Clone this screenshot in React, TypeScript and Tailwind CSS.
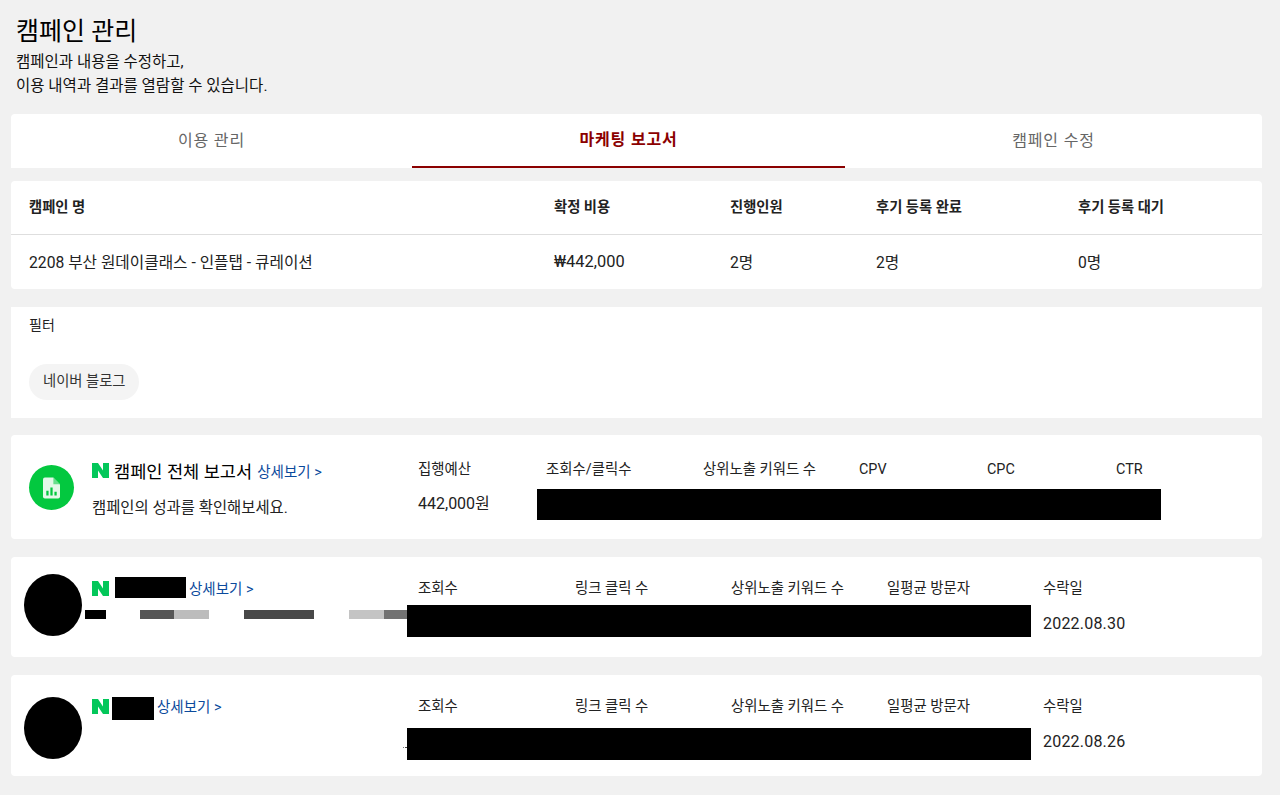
const FONT = 'font-["Roboto","Noto_Sans_CJK_KR",sans-serif]';

function NaverN({ className = '' }: { className?: string }) {
  return (
    <svg viewBox="0 0 17 15" className={`w-[17px] h-[15px] shrink-0 ${className}`}>
      <path d="M0 0h6l5 7.5V0h6v15h-6L6 7.5V15H0z" fill="#03c75a" />
    </svg>
  );
}

function DetailLink({ className = '' }: { className?: string }) {
  return <span className={`text-[14.5px] leading-5 text-[#0b4a9c] whitespace-nowrap ${className}`}>상세보기 &gt;</span>;
}

function ReportIcon() {
  return (
    <div className="w-[45px] h-[45px] rounded-full bg-[#03c83f] flex items-center justify-center shrink-0">
      <svg viewBox="0 0 18 22" className="w-[17px] h-[22px]">
        <path d="M2 0h9l7 7v13a2 2 0 0 1-2 2H2a2 2 0 0 1-2-2V2a2 2 0 0 1 2-2z" fill="#e4f8e9" />
        <path d="M11 0l7 7h-7z" fill="#03c83f" opacity="0.55" />
        <path d="M3.5 14h2.4v5H3.5zM7.8 10.5h2.4V19H7.8zM12.1 15h2.4v4h-2.4z" fill="#03c83f" />
      </svg>
    </div>
  );
}

const INFO_COLS = [
  { head: '캠페인 명', value: '2208 부산 원데이클래스 - 인플탭 - 큐레이션', w: 'w-[525px]', size: 'text-[15.7px]' },
  { head: '확정 비용', value: '₩442,000', w: 'w-[176px]', size: 'text-[16.4px]' },
  { head: '진행인원', value: '2명', w: 'w-[146px]', size: 'text-[15.7px]' },
  { head: '후기 등록 완료', value: '2명', w: 'w-[202px]', size: 'text-[15.7px]' },
  { head: '후기 등록 대기', value: '0명', w: 'w-[150px]', size: 'text-[15.7px]' },
];

const ROW_HEADS = [
  { label: '조회수', w: 'w-[157px]' },
  { label: '링크 클릭 수', w: 'w-[156px]' },
  { label: '상위노출 키워드 수', w: 'w-[156px]' },
  { label: '일평균 방문자', w: 'w-[156px]' },
  { label: '수락일', w: 'w-[100px]' },
];

function InfluencerRow({ second }: { second?: boolean }) {
  return (
    <section className={`relative mt-[18px] bg-white rounded-[4px] flex ${second ? 'h-[101px]' : 'h-[100px]'}`}>
      <div className={`w-[58px] h-[62px] rounded-[50%] bg-black ml-[13px] shrink-0 ${second ? 'mt-[22px]' : 'mt-[17px]'}`} />
      <div className={`ml-[10px] w-[326px] shrink-0 ${second ? 'pt-[22px]' : 'pt-[20px]'}`}>
        <div className="flex items-start">
          <NaverN className={second ? 'mt-[2px]' : 'mt-[4px]'} />
          {second ? (
            <div className="w-[42px] h-[23px] bg-black ml-[3px] mr-[3px]" />
          ) : (
            <div className="w-[71px] h-[21px] bg-black ml-[6px] mr-[3px]" />
          )}
          <DetailLink className={second ? 'mt-[1px]' : 'mt-[3px]'} />
        </div>
        {!second && (
          <div className="flex h-[9px] mt-[10px] -ml-[7px]">
            <div className="w-[21px] bg-black" />
            <div className="w-[34px] ml-[34px] bg-[#555555]" />
            <div className="w-[35px] bg-[#bcbcbc]" />
            <div className="w-[70px] ml-[35px] bg-[#484848]" />
            <div className="w-[35px] ml-[35px] bg-[#c4c4c4]" />
            <div className="w-[24px] bg-[#727272]" />
          </div>
        )}
      </div>
      <div className="flex-1 pt-[22px]">
        <div className="flex text-[14.4px] leading-5 text-[#222222]">
          {ROW_HEADS.map(h => (
            <div key={h.label} className={h.w}>{h.label}</div>
          ))}
        </div>
        <div className="mt-[15px] pl-[625px] text-[16px] leading-5 text-[#222222] tracking-[0.2px]">
          {second ? '2022.08.26' : '2022.08.30'}
        </div>
      </div>
      {/* redaction over the metric values */}
      <div className={`absolute left-[396px] w-[624px] h-[32px] bg-black ${second ? 'top-[53px]' : 'top-[48px]'}`} />
      {second && (
        <div className="absolute left-[392px] top-[72px] flex gap-[1px]">
          <div className="w-px h-px bg-[#777777]" />
          <div className="w-[2px] h-px bg-[#444444]" />
        </div>
      )}
    </section>
  );
}

export default function App() {
  return (
    <div className={`min-h-[795px] bg-[#f1f1f1] pl-[11px] pr-[18px] pb-[19px] text-[#111111] ${FONT}`}>
      <header className="pt-[15px] pl-[5px] h-[114px]">
        <h1 className="text-[25px] leading-[34px] text-black">캠페인 관리</h1>
        <p className="mt-[1px] text-[15.5px] leading-[24px] text-[#111111]">
          캠페인과 내용을 수정하고,
          <br />
          이용 내역과 결과를 열람할 수 있습니다.
        </p>
      </header>

      <nav className="flex h-[54px] bg-white rounded-t-[4px] text-[16px] tracking-[0.8px]">
        <div className="w-[401px] flex items-center justify-center text-[#666666]">이용 관리</div>
        <div className="w-[433px] flex items-center justify-center border-b-2 border-[#8b0000] text-[#8b0000] font-bold">마케팅 보고서</div>
        <div className="flex-1 flex items-center justify-center text-[#666666]">캠페인 수정</div>
      </nav>

      <section className="mt-[13px] h-[108px] bg-white rounded-[4px]">
        <div className="flex h-[54px] items-center pl-[18px] border-b border-[#dedede] text-[14.3px] font-bold text-[#222222]">
          {INFO_COLS.map(c => (
            <div key={c.head} className={c.w}>{c.head}</div>
          ))}
        </div>
        <div className="flex h-[53px] items-center pl-[18px] pt-[2px] text-[#222222]">
          {INFO_COLS.map(c => (
            <div key={c.head} className={`${c.w} ${c.size}`}>{c.value}</div>
          ))}
        </div>
      </section>

      <section className="mt-[18px] h-[111px] bg-white pl-[18px] pt-[8px]">
        <div className="text-[14px] leading-5 text-[#222222]">필터</div>
        <div className="mt-[29px] inline-flex items-center h-[36px] px-[14px] rounded-full bg-[#f4f4f4] text-[14.3px] text-[#333333]">
          네이버 블로그
        </div>
      </section>

      <section className="relative mt-[17px] h-[104px] bg-white rounded-[4px] flex">
        <div className="ml-[18px] mt-[30px]">
          <ReportIcon />
        </div>
        <div className="ml-[18px] w-[326px] pt-[25px] shrink-0">
          <div className="flex items-center">
            <NaverN className="-mt-[3px]" />
            <span className="ml-[5px] text-[17.6px] leading-6 text-black whitespace-nowrap">캠페인 전체 보고서</span>
            <span className="ml-[5px]"><DetailLink /></span>
          </div>
          <div className="mt-[14px] text-[15.4px] leading-5 text-[#222222]">캠페인의 성과를 확인해보세요.</div>
        </div>
        <div className="flex-1 pt-[25px]">
          <div className="flex text-[14.4px] leading-5 text-[#222222]">
            <div className="w-[128px]">집행예산</div>
            <div className="w-[157px]">조회수/클릭수</div>
            <div className="w-[156px]">상위노출 키워드 수</div>
            <div className="w-[128px]">CPV</div>
            <div className="w-[129px]">CPC</div>
            <div>CTR</div>
          </div>
          <div className="mt-[14px] text-[16px] leading-5 text-[#222222]">442,000원</div>
        </div>
        <div className="absolute left-[526px] top-[54px] w-[624px] h-[31px] bg-black" />
      </section>

      <InfluencerRow />
      <InfluencerRow second />
    </div>
  );
}
